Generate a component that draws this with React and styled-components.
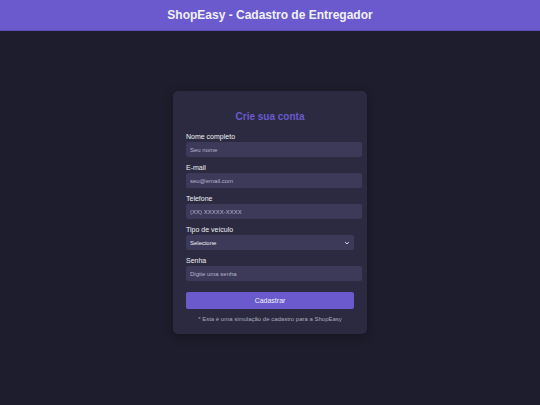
import styled, { createGlobalStyle } from "styled-components";

const colors = {
  accent: "#6a5acd",
  page: "#1e1d2d",
  card: "#2b2a40",
  field: "#3d3959",
  text: "#f0f0f5",
  muted: "#a9a9bd",
};

const GlobalStyle = createGlobalStyle`
  html, body {
    margin: 0;
    padding: 0;
    background: ${colors.page};
    font-family: "Liberation Sans", Arial, sans-serif;
  }
  * {
    box-sizing: border-box;
  }
`;

export default function App() {
  return (
    <>
      <GlobalStyle />
      <Page>
        <Header>ShopEasy - Cadastro de Entregador</Header>
        <Main>
          <Card>
            <Title>Crie sua conta</Title>
            <Field>
              <Label>Nome completo</Label>
              <Input placeholder="Seu nome" />
            </Field>
            <Field>
              <Label>E-mail</Label>
              <Input placeholder="seu@email.com" />
            </Field>
            <Field>
              <Label>Telefone</Label>
              <Input placeholder="(XX) XXXXX-XXXX" />
            </Field>
            <Field>
              <Label>Tipo de veículo</Label>
              <SelectBox>
                <span>Selecione</span>
                <Chevron viewBox="0 0 10 10">
                  <path d="M2 3.5 L5 6.5 L8 3.5" />
                </Chevron>
              </SelectBox>
            </Field>
            <Field>
              <Label>Senha</Label>
              <Input type="password" placeholder="Digite uma senha" />
            </Field>
            <Button>Cadastrar</Button>
            <Note>* Esta é uma simulação de cadastro para a ShopEasy</Note>
          </Card>
        </Main>
      </Page>
    </>
  );
}

const Page = styled.div`
  display: flex;
  flex-direction: column;
  min-height: 405px;
`;

const Header = styled.header`
  height: 31px;
  background: ${colors.accent};
  border-bottom: 1px solid #5a4db3;
  color: ${colors.text};
  font-size: 12px;
  font-weight: bold;
  display: flex;
  align-items: center;
  justify-content: center;
`;

const Main = styled.main`
  flex: 1;
  display: flex;
  justify-content: center;
  padding-top: 60px;
`;

const Card = styled.div`
  width: 194px;
  height: 243px;
  background: ${colors.card};
  border-radius: 5px;
  box-shadow: 0 2px 10px rgba(0, 0, 0, 0.35);
  padding: 20px 13px 0;
  display: flex;
  flex-direction: column;
`;

const Title = styled.h2`
  margin: 0 0 9px;
  text-align: center;
  color: ${colors.accent};
  font-size: 10px;
  line-height: 12px;
  font-weight: bold;
`;

const Field = styled.div`
  display: flex;
  flex-direction: column;
  margin-bottom: 6px;
`;

const Label = styled.label`
  color: ${colors.text};
  font-size: 7px;
  line-height: 9px;
  margin-bottom: 1px;
`;

const Input = styled.input`
  width: 176px;
  height: 15px;
  border: none;
  border-radius: 2px;
  background: ${colors.field};
  padding: 0 4px;
  font-family: inherit;
  font-size: 6px;
  color: ${colors.text};
  outline: none;

  &::placeholder {
    color: #b5b3c8;
  }
`;

const SelectBox = styled.div`
  width: 168px;
  height: 15px;
  border-radius: 2px;
  background: ${colors.field};
  padding: 0 4px;
  display: flex;
  align-items: center;
  justify-content: space-between;
  font-size: 6px;
  color: ${colors.text};
`;

const Chevron = styled.svg`
  width: 6px;
  height: 6px;
  fill: none;
  stroke: ${colors.text};
  stroke-width: 1.6;
`;

const Button = styled.button`
  margin-top: 5px;
  width: 168px;
  height: 17px;
  border: none;
  border-radius: 2px;
  background: ${colors.accent};
  color: ${colors.text};
  font-family: inherit;
  font-size: 7px;
  cursor: pointer;
`;

const Note = styled.p`
  margin: 6px 0 0;
  text-align: center;
  color: ${colors.muted};
  font-size: 6px;
  line-height: 8px;
`;
